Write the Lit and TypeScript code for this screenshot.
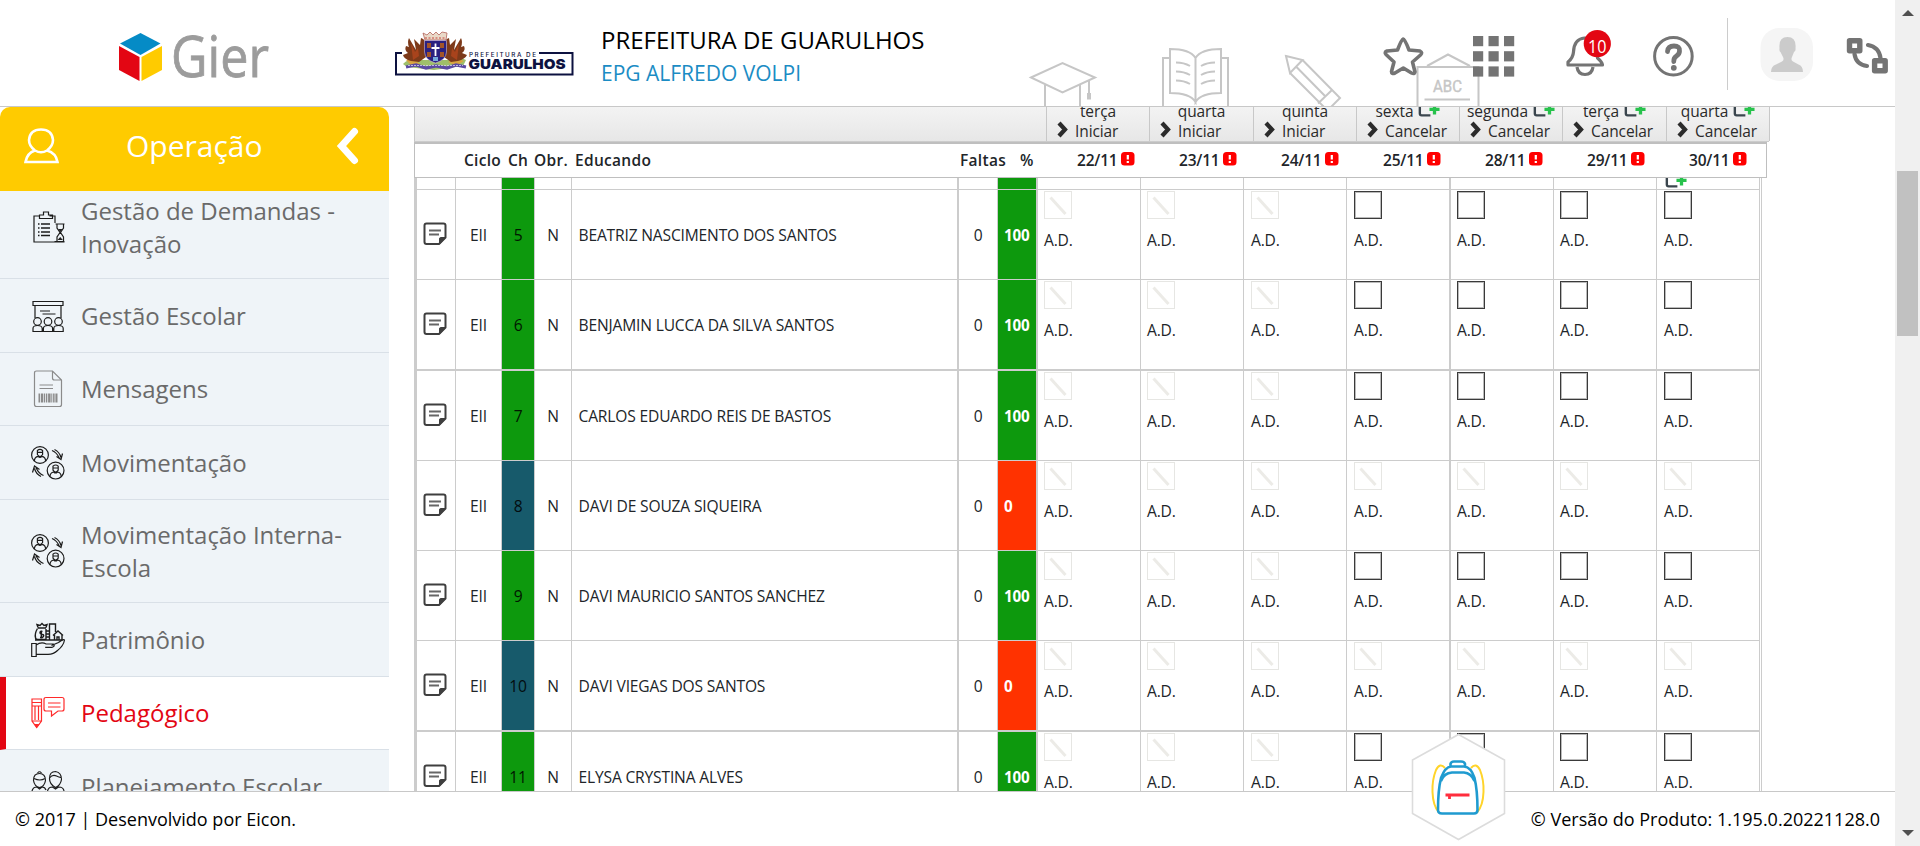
import { LitElement, html, svg, css, nothing } from "lit";
import { customElement } from "lit/decorators.js";
import { classMap } from "lit/directives/class-map.js";

type Tone = "green" | "blue";
interface Student { ch: number; name: string; pct: number; tone: Tone; thick?: boolean; }
interface Day { label: string; date: string; open: boolean; }
interface MenuItem { icon: string; lines: string[]; tall?: boolean; active?: boolean; high?: boolean; }

const students: Student[] = [
  { ch: 5, name: "BEATRIZ NASCIMENTO DOS SANTOS", pct: 100, tone: "green" },
  { ch: 6, name: "BENJAMIN LUCCA DA SILVA SANTOS", pct: 100, tone: "green", thick: true },
  { ch: 7, name: "CARLOS EDUARDO REIS DE BASTOS", pct: 100, tone: "green" },
  { ch: 8, name: "DAVI DE SOUZA SIQUEIRA", pct: 0, tone: "blue" },
  { ch: 9, name: "DAVI MAURICIO SANTOS SANCHEZ", pct: 100, tone: "green" },
  { ch: 10, name: "DAVI VIEGAS DOS SANTOS", pct: 0, tone: "blue", thick: true },
  { ch: 11, name: "ELYSA CRYSTINA ALVES", pct: 100, tone: "green" },
];

const days: Day[] = [
  { label: "terça", date: "22/11", open: false },
  { label: "quarta", date: "23/11", open: false },
  { label: "quinta", date: "24/11", open: false },
  { label: "sexta", date: "25/11", open: true },
  { label: "segunda", date: "28/11", open: true },
  { label: "terça", date: "29/11", open: true },
  { label: "quarta", date: "30/11", open: true },
];

const menu: MenuItem[] = [
  { icon: "clipboard", lines: ["Gestão de Demandas -", "Inovação"], tall: true },
  { icon: "class", lines: ["Gestão Escolar"], high: true },
  { icon: "document", lines: ["Mensagens"] },
  { icon: "people", lines: ["Movimentação"], high: true },
  { icon: "people", lines: ["Movimentação Interna-", "Escola"], tall: true },
  { icon: "assets", lines: ["Patrimônio"], high: true },
  { icon: "pencil", lines: ["Pedagógico"], active: true },
  { icon: "teachers", lines: ["Planejamento Escolar"], high: true },
];

const face = (x: number, y: number) => svg`
  <circle cx=${x} cy=${y} r="8.4"/>
  <path d="M${x - 2.6} ${y - 4.5}q2.6 -2.2 5.2 0v4q-2.6 4 -5.2 0zM${x - 2.6} ${y - 2.6}h5.2M${x - 5.6} ${y + 6}q0 -4 3.8 -4.6q1.8 2 3.6 0q3.8 .6 3.8 4.6"/>`;

const glyphs: Record<string, unknown> = {
  clipboard: svg`<path d="M24 13V6H18.5M9 6H3V32H33.500M8.500 8.500V5H12.500V2h5v3H21.500V8.500zM24.500 14h9M26 14.500v3.500l3 4.500l-3 4.500V31M32.500 14.500v3.500l-3 4.500l3 4.500V31M23.500 31.500h10"/><path stroke-width="1.6" d="M7 14h1.500M10 14h9M7 18h1.500M10 18h9M7 22h1.500M10 22h9M7 25.500h1.500M10 25.500h9"/><path fill="#222" stroke="none" d="M27 19h4.500l-2.200 3zM26.500 30l2.700-3l2.700 3z"/>`,
  class: svg`<path d="M2 2.500h30v4H2zM4 6.500V19M30 6.500V19M9 12h10M11.500 15h13"/><circle cx="6.500" cy="22.500" r="3.800"/><circle cx="17" cy="22.500" r="3.800"/><circle cx="27.500" cy="22.500" r="3.800"/><path d="M2 32.500v-3q0-3 4.500-3t4.700 3v3zM12.400 32.500v-3q0-3 4.600-3t4.600 3v3zM22.800 32.500v-3q0-3 4.700-3t4.700 3v3z"/>`,
  document: svg`<g stroke="#8b8b8b"><path d="M5.500-1H21.500l9 9V32.500q0 2-2 2H5.500q-2 0-2-2V1q0-2 2-2zM21.500-1V6q0 2 2 2h7M8.500 13h13.500M8.500 16.500h13.500"/><path stroke-width="9" stroke-dasharray="1.500 .800 2.500 .700 1 .800" d="M7.500 26h19"/></g>`,
  people: svg`${face(9, 9)}${face(24.600, 24.600)}<path d="M21 4.500q5 2 7.500 8M23.500 3.500q5 2.500 6.500 8M25.500 10.500l4.500 3l1.500-6M12.500 29.500q-5-2-7.500-8M10 30.500q-5-2.500-6.500-8M8.500 23.500l-5-3.500l-2 6.500"/>`,
  assets: svg`<path d="M.700 20.500h4.500v13H.700zM5.200 22q5-3.500 10-1h7q2.500 2-1 3.300h-7M20.500 22.500l7-3q5-4 6-2.500q-1 6-7 10.500q-4 4-10 3.800H5.200"/><path stroke-width="1.400" d="M7 4.500l-1-3l3 1l2-2l2 2l3-1l-1 3M7 5h8M6.500 5.500q-3 5-2 9q0 2 2.500 2H15V6M18.500 16.500V1h6v8M15 8h3.500M15 11h3.500M15 14h3.500M22 12.500l5-4.500l5 4.500M23.500 12v5h7.500v-5M26 17v-3h2v3M4 17h27"/><path stroke-width="1.400" d="M11.500 8.500q-2.500-.500-2.500 1t2.500 2t0 3h-2.500M10.300 7.500v8"/>`,
  pencil: svg`<g stroke="#ff2a2a"><path d="M1 3h9.500v22L5.700 31.500L1 25zM1 6.500h9.500M1 10h9.500M4 10v14M7.500 10v14M1 25h9.500"/><path fill="#ff2a2a" d="M4 28.500h3.500L5.700 31z"/><path d="M15 1.500H31q2 0 2 2V13q0 2-2 2H27l-6.500 5V15H15q-2 0-2-2V3.500q0-2 2-2zM17 7h12.500M17 11h12.500"/></g>`,
  teachers: svg`<path d="M6.500 3q2-2.500 4 0M8.500 3.500q-6 0-6 7q1 6 6 7q5-1 6-7q0-7-6-7zM3 8.500q6 3 11 0M1 21q1-4 5-4l2.500 2l2.500-2q3 0 4 3M24.500 1.500q-6 0-6 7q0 6 6 9q5-2 6-8q0-7-6-8zM18.500 8q3-4 7-2t5 1M16.500 21q1-4 5-4l3 2l3-2q5 0 5.500 4"/>`,
};

const addBox = svg`<path d="M8 1H4Q2 1 2 3V16.500Q2 18.500 4 18.500H13.500M8 1H14" fill="none" stroke="#3b464e" stroke-width="2.600"/><path d="M7 8.200H14.500" stroke="#77808a" stroke-width="2"/><path d="M16.200 6.500h3.600v3.700H23.500v3.600H19.800V17.500H16.200V13.800H12.500V10.200H16.200z" fill="#27c24c"/>`;

@customElement("side-menu")
class SideMenu extends LitElement {
  static styles = css`
    :host { display: flex; flex-direction: column; width: 389px; overflow: hidden; }
    .top { flex: none; height: 84px; background: #ffcb00; border-radius: 10px 10px 0 0; display: flex; align-items: center; color: #fff; font-size: 30px; }
    .user { width: 37px; height: 38px; margin-left: 23px; margin-top: -6px; }
    .title { margin-left: 66px; margin-top: -8px; width: 208px; }
    .arrow { width: 26px; height: 40px; margin-top: -6px; }
    .list { flex: 1; min-height: 0; overflow: hidden; }
    .item { box-sizing: border-box; height: 73px; display: flex; align-items: center; background: #eff4f8; border-bottom: 1px solid #d9e0e7; color: #6a6a6a; font-size: 24px; line-height: 33px; padding: 0 0 1px 31px; gap: 16px; }
    .item.high { height: 74px; padding-bottom: 0; }
    .item.tall { height: 103px; padding-bottom: 0; }
    .item:first-child { margin-top: -15px; }
    .item.active { background: #fff; color: #e30613; border-left: 6px solid #e30613; padding-left: 25px; }
    .icon { width: 34px; height: 34px; flex: none; overflow: visible; fill: none; stroke: #1c1c1c; stroke-width: 1.200; }
  `;
  render() {
    return html`
      <div class="top">
        <svg class="user" viewBox="23 127 37 38" fill="none" stroke="#fff" stroke-width="2.600"><path d="M35 150.500Q29 146 29 140Q30 129.500 41 129.500T53 140Q53 146 47 150.500M35 150.500Q27 153 25.500 162H57.500Q56 153 47 150.500M35 150.500q6 3.500 12 0"/></svg>
        <span class="title">Operação</span>
        <svg class="arrow" viewBox="335 126 26 40" fill="none" stroke="#fff" stroke-width="7" stroke-linecap="round"><path d="M355.500 131.500L342.500 146L355.500 160.500"/></svg>
      </div>
      <div class="list">
        ${menu.map((m) => html`
          <div class=${classMap({ item: true, high: !!m.high, tall: !!m.tall, active: !!m.active })}>
            <svg class="icon" viewBox="0 0 34 34">${glyphs[m.icon]}</svg>
            <span>${m.lines.map((l, i) => html`${i ? html`<br />` : nothing}${l}`)}</span>
          </div>`)}
      </div>`;
  }
}

@customElement("top-bar")
class TopBar extends LitElement {
  static styles = css`
    :host { position: relative; display: flex; align-items: flex-start; height: 106px; border-bottom: 1px solid #c8c8c8; background: #fff; }
    svg { display: block; flex: none; }
    .decor { position: absolute; left: 1020px; top: 40px; width: 470px; height: 66px; }
    .logo { width: 155px; height: 60px; margin: 28px 0 0 117px; overflow: visible; }
    .crest { width: 184px; height: 50px; margin: 29px 0 0 121px; }
    .names { margin: 23px 0 0 24px; width: 779px; white-space: nowrap; }
    .city { font-size: 24px; line-height: 34px; color: #000; }
    .school { font-size: 21px; line-height: 33px; color: #1b8cc4; }
    .tools { position: relative; width: 515px; height: 106px; }
  `;
  render() {
    return html`
      <svg class="decor" viewBox="1020 40 470 66" fill="none" stroke="#c6c6c6" stroke-width="2">
        <path d="M1031 77.500L1062.500 63L1095 77.500L1062.500 92.500zM1045 85V107M1080 85V107M1089 80V93"/>
        <path stroke-width="4" d="M1089 93V99.500"/>
        <path d="M1170 58H1163V107M1221.500 58H1228V107M1170 49Q1190 49 1195.500 58V102Q1190 93 1170 93zM1221 49Q1201 49 1195.500 58V102Q1201 93 1221 93zM1176 62.500q8 0 14 3.500M1176 71.500q8 0 14 3.500M1176 80.500q8 0 14 3.500M1215 62.500q-8 0-14 3.500M1215 71.500q-8 0-14 3.500M1215 80.500q-8 0-14 3.500"/>
        <path d="M1286 56L1302.500 60L1290 73zM1302.500 60L1340 98L1328 110M1290 73L1326 109M1296.500 67L1325 96M1332 90L1318 103.500"/>
        <path d="M1427 66L1448 54.500L1470 66M1417.500 107V67H1478.500V107M1424.500 99.500H1470"/>
        <text x="1433" y="92" textLength="29" lengthAdjust="spacingAndGlyphs" font-family="Roboto, sans-serif" font-size="16" fill="#c6c6c6" stroke="#c6c6c6" stroke-width=".400">ABC</text>
      </svg>
      <svg class="logo" viewBox="117 28 155 60">
        <path fill="#058bc6" d="M140.500 33L160.500 43.500L140.500 55L120 43.500z"/>
        <path fill="#e30613" d="M119 46L139.500 57V81L119 70z"/>
        <path fill="#ffcb00" d="M141.500 57L162 46V70L141.500 81z"/>
        <text x="171" y="77" textLength="98" lengthAdjust="spacingAndGlyphs" font-family="Open Sans, sans-serif" font-size="56" fill="#9c9c9c" stroke="#9c9c9c" stroke-width=".800">Gier</text>
      </svg>
      <svg class="crest" viewBox="393 29 184 50">
        <path d="M402 53H396V74.500H572.500V53H539" fill="none" stroke="#0d1240" stroke-width="2"/>
        <text x="469" y="57" textLength="67" lengthAdjust="spacing" font-family="Inter, sans-serif" font-size="6.300" font-weight="500" fill="#0d1240">PREFEITURA DE</text>
        <text x="468.500" y="69.300" textLength="97" lengthAdjust="spacingAndGlyphs" font-family="Inter, sans-serif" font-size="13.800" font-weight="900" fill="#0d1240">GUARULHOS</text>
        <path fill="#9fbf6a" d="M403 64Q410 57 420 60H448Q458 55 466 60L463 66L434 70L407 67z"/>
        <path fill="#d9a541" d="M406 60q8-2 14 4l-8 2zM448 62q8-5 16-1l-8 5z"/>
        <path fill="#7d3a1a" d="M409 38L416 50L414 39L420 45L421 38Q426 39 425 46L426 57L419 62L411 61Q404 59 403 55L408 53Q404 50 406 46L409 47Q407 42 409 38z"/>
        <path fill="#7d3a1a" d="M461 38L454 50L456 39L450 45L449 38Q444 39 445 46L444 57L451 62L458 61Q465 59 467 55L462 53Q466 50 464 46L461 47Q463 42 461 38z"/>
        <path fill="#a8431c" d="M411 43l4 9l3-4l1 8l-6 4zM459 43l-4 9l-3-4l-1 8l6 4z"/>
        <path fill="#e9d9c8" stroke="#b4635a" stroke-width=".800" d="M423 33L427 35L430 32L433 35L436 32L439 35L442 32L447 33L446 40H425z"/>
        <path stroke="#c5473c" stroke-width="1" stroke-dasharray="2 1.500" d="M425 38H446" />
        <path fill="#2b2180" stroke="#c9b9d8" stroke-width=".600" d="M424.500 40.500H446.500V52Q446 60 435.500 63Q425 60 424.500 52z"/>
        <path fill="#a3552a" d="M427 43h4v5h-4zM440 43h4v5h-4zM427 52h4v5h-4zM440 52h4v5h-4z"/>
        <path stroke="#fff" stroke-width="1.800" d="M435.500 43.500V56M431.500 48H439.500"/>
        <path fill="#76aadb" d="M433 57h5v4h-5z"/>
        <path fill="none" stroke="#5b4aa3" stroke-width="3.200" d="M406 67L416 65L426 68L436 66L447 68L456 65L466 67"/>
        <path fill="none" stroke="#d9d3ee" stroke-width=".800" stroke-dasharray="2 1" d="M408 65.500L436 65.500L463 65.500"/>
      </svg>
      <div class="names"><div class="city">PREFEITURA DE GUARULHOS</div><div class="school">EPG ALFREDO VOLPI</div></div>
      <svg class="tools" viewBox="1380 0 515 106" fill="none" stroke="#747474">
        <path stroke-width="3.600" stroke-linejoin="round" d="M1403.300 39Q1404.800 39 1409 50L1420 51Q1423 52.500 1420.500 55L1412.500 62L1415 72Q1414.500 74.500 1411.500 73L1403.300 68L1395 73Q1391.500 74.500 1391.500 71.500L1394 62L1386 54.500Q1384 52 1387 51L1397.500 50Q1401.500 39.500 1403.300 39z"/>
        <g fill="#747474" stroke="none">${[0, 1, 2].map((r) => [0, 1, 2].map((c) => svg`<rect x=${1473 + c * 15.500} y=${36 + r * 15.200} width="10.200" height="10.200"/>`))}</g>
        <path stroke-width="3.200" stroke-linejoin="round" d="M1568 65H1602.500Q1602 62 1597.500 58Q1597 38 1584.500 38Q1574 39 1573.500 52Q1573 58 1568 62z"/>
        <path stroke-width="3.200" d="M1577 67Q1578 74.500 1585 74.500T1593 67"/>
        <circle cx="1597.300" cy="43.700" r="13.600" fill="#e30613" stroke="none"/>
        <text x="1588" y="52.500" textLength="18.500" lengthAdjust="spacingAndGlyphs" font-family="Open Sans, sans-serif" font-size="17.500" fill="#fff" stroke="none">10</text>
        <circle cx="1673.400" cy="56.200" r="18.800" stroke-width="3"/>
        <path stroke-width="4.800" stroke-linecap="round" d="M1667.500 51.500Q1668 46 1674 46T1679.500 51Q1679.500 54 1676.500 56T1673.800 61.500"/><circle cx="1673.800" cy="67.800" r="2.900" fill="#747474" stroke="none"/>
        <path stroke="#ccc" stroke-width="1" d="M1727.500 18V90"/>
        <rect x="1760.500" y="28" width="52.500" height="53" rx="19" fill="#f5f5f5" stroke="none"/>
        <path fill="#cbcbcb" stroke="none" d="M1771 72Q1771 66 1776 64.500L1782 61.500Q1784.500 60 1783 57L1780.500 52Q1779 51.500 1779.500 48Q1778.500 37 1787.500 37T1795.500 48Q1796 51.500 1794 52L1792 57Q1790.500 60 1793 61.500L1798.500 64.500Q1803 66 1803 72z"/>
        <path stroke-width="5.400" stroke-linejoin="round" d="M1849.500 40.800h10.300v10h-10.300zM1874.600 60.800h10.600v10h-10.600z"/>
        <path stroke-width="4.200" stroke-linecap="round" d="M1868 45Q1879 47 1880.500 58M1854.500 54Q1856 64.500 1867 66"/>
      </svg>`;
  }
}

@customElement("attendance-grid")
class AttendanceGrid extends LitElement {
  static styles = css`
    :host { display: block; width: 1356px; color: #212529; overflow: hidden; }
    * { box-sizing: border-box; }
    .band { display: grid; grid-template-columns: 632px 103px 104px 103px 103px 103px 104px 103px; width: 1355px; height: 35px; background: linear-gradient(#f3f3f3, #e7e7e7); border-left: 1px solid #c8c8c8; border-bottom: 1px solid #ccc; }
    .band > div { border-right: 1px solid #c8c8c8; overflow: hidden; font-size: 15.500px; letter-spacing: -.1px; color: #2a2a2a; line-height: 20px; }
    .weekday { height: 14px; display: flex; justify-content: center; align-items: flex-end; gap: 5px; }
    .plus { width: 22px; height: 20px; margin-bottom: 3px; flex: none; }
    .act { display: flex; align-items: center; padding-left: 10px; gap: 8px; }
    .act svg { width: 11px; height: 17px; margin-top: -3px; margin-right: -1px; }
    .head { display: grid; grid-template-columns: 44px 44px 26px 41px 385px 60px 56px repeat(7, 102px); width: 1353px; height: 36px; border: 1px solid #bfbfbf; border-top: 2px solid #bfbfbf; background: #fff; font-size: 15.500px; font-weight: 600; letter-spacing: .3px; line-height: 20px; white-space: nowrap; }
    .head > div { display: flex; align-items: center; padding-bottom: 1px; }
    .head .pad { padding-left: 5px; }
    .head .date { gap: 5px; padding-left: 6px; letter-spacing: 0; }
    .head .date span { width: 39px; letter-spacing: -.2px; }
    .warn { width: 14px; height: 14px; margin-top: -2px; }
    .body { width: 1348px; border-left: 3px solid #ccc; border-right: 1px solid #ccc; }
    .row { display: grid; grid-template-columns: 39px 46px 33px 37px 387px 39px 40px 103px 103px 103px 104px 103px 103px 103px; height: 90px; border-bottom: 1px solid #ccc; width: 1343px; }
    .row.thick { height: 91px; border-bottom-width: 2px; }
    .row.cut { height: 12px; overflow: hidden; }
    .cell { border-right: 1px solid #ccc; display: flex; align-items: center; justify-content: center; overflow: hidden; font-size: 15.600px; letter-spacing: -.17px; padding-top: 1px; }
    .wide { border-right-width: 2px; }
    .name { justify-content: flex-start; padding-left: 6.500px; }
    .ch { color: #000; }
    .ch span { opacity: .850; }
    .green { background: #0d990d; }
    .blue { background: #175a6b; }
    .red { background: #ff3200; }
    .pct { color: #fff; font-weight: 700; font-size: 15.200px; justify-content: flex-start; padding-left: 6px; }
    .day { display: block; padding: 1px 0 0 6px; }
    .day.shift { padding-left: 7px; }
    .box { display: block; width: 28px; height: 28px; }
    .ad { display: block; line-height: 20px; margin-top: 10.500px; }
    .note { width: 24px; height: 24px; margin-left: -3px; margin-top: -3px; }
    .extra { width: 22px; height: 22px; display: block; margin-top: -11px; margin-left: 1px; }
  `;

  private box(open: boolean) {
    return open
      ? html`<svg class="box" viewBox="0 0 28 28" fill="none"><rect x="1.500" y="1.500" width="25" height="25" stroke="#bbb"/><rect x=".500" y=".500" width="27" height="27" stroke="#3a3a3a"/></svg>`
      : html`<svg class="box" viewBox="0 0 28 28" fill="none"><rect x=".500" y=".500" width="27" height="27" stroke="#e6e6e3"/><path d="M6.500 6.500L21.500 23" stroke="#ecebe7" stroke-width="3"/></svg>`;
  }

  private dayCell(i: number, content: unknown) {
    return html`<div class=${classMap({ cell: true, day: true, wide: i === 3, shift: i === 2 || i === 3 || i === 6 })}>${content}</div>`;
  }

  render() {
    return html`
      <div class="band">
        <div></div>
        ${days.map((d) => html`<div>
          <div class="weekday"><span>${d.label}</span>${d.open ? html`<svg class="plus" viewBox="0 0 24 21">${addBox}</svg>` : nothing}</div>
          <div class="act"><svg viewBox="0 0 11 17" fill="none" stroke="#2b2b2b" stroke-width="4.200"><path d="M2 2L8 8.500L2 15"/></svg><span>${d.open ? "Cancelar" : "Iniciar"}</span></div>
        </div>`)}
      </div>
      <div class="head">
        <div></div><div class="pad">Ciclo</div><div class="pad">Ch</div><div class="pad">Obr.</div><div class="pad">Educando</div><div class="pad">Faltas</div><div class="pad">%</div>
        ${days.map((d) => html`<div class="date"><span>${d.date}</span><svg class="warn" viewBox="0 0 14 14"><rect width="13.500" height="13.500" rx="3.500" fill="#f00"/><path d="M6.800 3V7.500M6.800 9V11" stroke="#fff" stroke-width="2.200"/></svg></div>`)}
      </div>
      <div class="body">
        <div class="row cut">
          <div class="cell"></div><div class="cell"></div><div class="cell green"></div><div class="cell"></div><div class="cell wide"></div><div class="cell"></div><div class="cell green wide"></div>
          ${days.map((_, i) => this.dayCell(i, i === 6 ? html`<svg class="extra" viewBox="0 0 24 21">${addBox}</svg>` : nothing))}
        </div>
        ${students.map((s) => html`
          <div class=${classMap({ row: true, thick: !!s.thick })}>
            <div class="cell"><svg class="note" viewBox="0 0 24 24" fill="none" stroke="#3f3f3f"><path stroke-width="2" stroke-linejoin="round" d="M3.500 1.500H20.500Q22.500 1.500 22.500 3.500V15.500L16 22H3.500Q1.500 22 1.500 20V3.500Q1.500 1.500 3.500 1.500z"/><path fill="#3f3f3f" d="M22.500 15.500H17.500Q16.500 15.500 16.500 17V22z"/><path stroke-width="1.800" stroke="#666" d="M6 8.500H18M6 12.500H16"/></svg></div>
            <div class="cell">EII</div>
            <div class="cell ch ${s.tone}"><span>${s.ch}</span></div>
            <div class="cell">N</div>
            <div class="cell wide name">${s.name}</div>
            <div class="cell">0</div>
            <div class="cell wide pct ${s.pct ? "green" : "red"}">${s.pct}</div>
            ${days.map((d, i) => this.dayCell(i, html`${this.box(d.open && s.pct > 0)}<span class="ad">A.D.</span>`))}
          </div>`)}
      </div>`;
  }
}

@customElement("app-root")
class AppRoot extends LitElement {
  static styles = css`
    :host { display: grid; grid-template-columns: 1895px 25px; height: 846px; overflow: hidden; background: #fff; font-family: "Open Sans", "Noto Sans", sans-serif; }
    .page { position: relative; display: grid; grid-template-rows: 107px minmax(0, 1fr) 55px; height: 846px; min-width: 0; }
    .main { display: flex; gap: 25px; overflow: hidden; }
    .foot { box-sizing: border-box; border-top: 1px solid #c8c8c8; background: #fff; display: flex; justify-content: space-between; align-items: center; padding: 0 15px 0 15px; font-size: 18px; color: #000; }
    .hex { position: absolute; left: 1410px; top: 732px; width: 97px; height: 110px; }
    .scroll { background: #f0f0f0; display: flex; flex-direction: column; align-items: center; }
    .up { width: 12px; height: 6px; margin-top: 10px; }
    .thumb { width: 21px; height: 165px; margin-top: 155px; background: #c1c1c1; }
    .down { width: 12px; height: 6px; margin-top: auto; margin-bottom: 10px; }
  `;
  render() {
    return html`
      <div class="page">
        <top-bar></top-bar>
        <div class="main"><side-menu></side-menu><attendance-grid></attendance-grid></div>
        <div class="foot"><span>© 2017 | Desenvolvido por Eicon.</span><span>© Versão do Produto: 1.195.0.20221128.0</span></div>
        <svg class="hex" viewBox="1410 732 97 110" fill="none">
          <path fill="#fff" stroke="#dcdcdc" stroke-width="1.600" d="M1458.500 734.500L1504.500 760V813.500L1458.500 839.500L1412.500 813.500V760z"/>
          <path stroke="#ffd42a" stroke-width="2" d="M1445 768Q1440 762 1436 770Q1432 780 1432.500 792Q1433 806 1439 812.500M1471 768Q1476 762 1480 770Q1484 780 1483.500 792Q1483 806 1477 812.500"/>
          <path stroke="#1f9bd0" stroke-width="2.600" d="M1450.500 767V764Q1451 761.500 1454 761.500H1461Q1464.500 761.500 1465 764V767M1438 810Q1438 790 1441 778Q1445 767 1451 766.500H1464Q1471 767 1474.500 778Q1477.500 790 1477.500 810Q1477.500 813.500 1474 813.500H1442Q1438 813.500 1438 810zM1441 781Q1444 773 1452 772.500H1464Q1471 773 1474.500 781"/>
          <path stroke="#ff2d3d" stroke-width="2.800" d="M1445.500 795H1469.500M1449.500 795V799"/>
        </svg>
      </div>
      <div class="scroll">
        <svg class="up" viewBox="0 0 12 6"><path d="M0 6L6 0L12 6z" fill="#505050"/></svg>
        <div class="thumb"></div>
        <svg class="down" viewBox="0 0 12 6"><path d="M0 0L6 6L12 0z" fill="#505050"/></svg>
      </div>`;
  }
}
